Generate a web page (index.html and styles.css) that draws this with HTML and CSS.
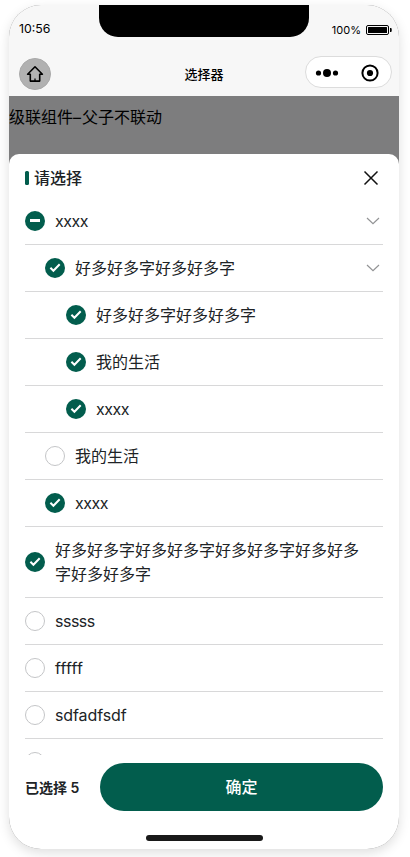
FILE: index.html
```html
<!DOCTYPE html>
<html lang="zh-CN">
<head>
<meta charset="utf-8">
<title>选择器</title>
<link rel="stylesheet" href="styles.css">
</head>
<body>
<svg class="defs" width="0" height="0">
  <symbol id="check" viewBox="0 0 20 20"><circle cx="10" cy="10" r="10" fill="#025d4d"/><path d="M5.4 9.8l3 3L14.7 6.3" fill="none" stroke="#fff" stroke-width="2"/></symbol>
  <symbol id="minus" viewBox="0 0 20 20"><circle cx="10" cy="10" r="10" fill="#025d4d"/><path d="M5 9.5h10" stroke="#fff" stroke-width="3"/></symbol>
  <symbol id="empty" viewBox="0 0 20 20"><circle cx="10" cy="10" r="9.5" fill="#fff" stroke="#c4c5c7"/></symbol>
  <symbol id="down" viewBox="0 0 14 8"><path d="M1 1l6 5.7L13 1" fill="none" stroke="#929395" stroke-width="1.2"/></symbol>
</svg>
<div class="phone">
  <div class="notch"></div>
  <header class="top">
    <div class="status">
      <span class="time">10:56</span>
      <span class="battery">100%
        <svg width="26" height="10" viewBox="0 0 26 10"><rect x=".5" y=".5" width="22" height="9" rx="1.5" fill="none" stroke="#000"/><rect x="2" y="2" width="19" height="6" rx=".5"/><path d="M24 3h.7q1 0 1 1v2q0 1-1 1H24z"/></svg>
      </span>
    </div>
    <div class="nav">
      <span class="home"><svg width="18" height="18" viewBox="0 0 18 18"><path d="M9 1.8L1.6 9.2h2.7v6.9h9.4V9.2h2.7z" fill="none" stroke="#000" stroke-width="1.6" stroke-linejoin="round"/><path d="M9 13.4V16" stroke="#000" stroke-width="1.3"/></svg></span>
      <h1>选择器</h1>
      <span class="capsule">
        <svg width="24" height="10" viewBox="0 0 24 10"><circle cx="3.5" cy="5" r="2.6"/><circle cx="12" cy="5" r="4"/><circle cx="20.5" cy="5" r="2.6"/></svg>
        <svg width="18" height="18" viewBox="0 0 18 18"><circle cx="9" cy="9" r="7.6" fill="none" stroke="#000" stroke-width="2"/><circle cx="9" cy="9" r="3.1"/></svg>
      </span>
    </div>
  </header>
  <div class="backdrop">级联组件<span class="dash">–</span>父子不联动</div>
  <section class="sheet">
    <div class="title"><i></i><h2>请选择</h2><svg width="16" height="16" viewBox="0 0 16 16"><path d="M1.5 1.5l13 13M14.5 1.5l-13 13" stroke="#111" stroke-width="1.5"/></svg></div>
    <ul class="list">
      <li><svg class="box"><use href="#minus"/></svg><span class="xs">xxxx</span><svg class="arrow"><use href="#down"/></svg></li>
      <li class="l1"><svg class="box"><use href="#check"/></svg><span>好多好多字好多好多字</span><svg class="arrow"><use href="#down"/></svg></li>
      <li class="l2"><svg class="box"><use href="#check"/></svg><span>好多好多字好多好多字</span></li>
      <li class="l2"><svg class="box"><use href="#check"/></svg><span>我的生活</span></li>
      <li class="l2"><svg class="box"><use href="#check"/></svg><span class="xs">xxxx</span></li>
      <li class="l1"><svg class="box"><use href="#empty"/></svg><span>我的生活</span></li>
      <li class="l1"><svg class="box"><use href="#check"/></svg><span class="xs">xxxx</span></li>
      <li class="tall"><svg class="box"><use href="#check"/></svg><span>好多好多字好多好多字好多好多字好多好多字好多好多字</span></li>
      <li><svg class="box"><use href="#empty"/></svg><span class="xs">sssss</span></li>
      <li><svg class="box"><use href="#empty"/></svg><span class="ff">fffff</span></li>
      <li><svg class="box"><use href="#empty"/></svg><span class="mixed">sdfadfsdf</span></li>
      <li><svg class="box"><use href="#empty"/></svg></li>
    </ul>
    <div class="footer"><span>已选择 5</span><button>确定</button></div>
    <div class="indicator"></div>
  </section>
</div>
</body>
</html>
```
FILE: styles.css
```css
* { box-sizing: border-box; }
body {
  margin: 0;
  height: 857px;
  padding: 5px 0 0 9px;
  overflow: hidden;
  background: #fff;
  font-family: Inter, "Noto Sans CJK SC", sans-serif;
  color: #202326;
}
.defs { position: absolute; }
.phone {
  position: relative;
  display: flex;
  flex-direction: column;
  width: 390px;
  height: 844px;
  border-radius: 32px;
  overflow: hidden;
  background: #7d7d7e;
  box-shadow: 0 4px 12px rgba(0, 0, 0, .13);
}
.notch {
  position: absolute;
  left: 90px;
  top: 0;
  width: 210px;
  height: 32px;
  border-radius: 0 0 19px 19px;
  background: #000;
}
.top { height: 91px; flex: none; background: #f7f7f7; color: #000; }
.status {
  display: flex;
  justify-content: space-between;
  height: 47px;
  padding: 15px 7px 0 10px;
  line-height: 18px;
}
.time { font-size: 12.3px; }
.battery { display: flex; align-items: center; gap: 5px; height: 20px; font-size: 11px; }
.nav {
  display: grid;
  grid-template-columns: 1fr auto 1fr;
  align-items: center;
  height: 44px;
  padding: 0 7px 0 10px;
}
.home {
  display: flex;
  align-items: center;
  justify-content: center;
  width: 32px;
  height: 32px;
  border: 1px solid #a9a9a9;
  border-radius: 50%;
  background: #b1b1b1;
}
h1 { margin: 0; padding-right: 3px; font-size: 13px; line-height: 20px; font-weight: 500; }
.capsule {
  justify-self: end;
  display: flex;
  align-items: center;
  justify-content: space-between;
  width: 87px;
  height: 32px;
  margin-top: -4px;
  padding: 1px 12px 0 9px;
  border: 1px solid #dcdcdc;
  border-radius: 16px;
  background: #fff;
}
.backdrop { flex: none; height: 58px; padding-top: 9px; font-size: 16px; line-height: 24px; color: #000; }
.dash { letter-spacing: 1px; }
.sheet {
  display: flex;
  flex-direction: column;
  flex: 1;
  min-height: 0;
  border-radius: 10px 10px 0 0;
  background: #fff;
}
.title { display: flex; align-items: center; height: 44px; flex: none; padding: 4px 20px 0 16px; }
.title i { width: 4px; height: 14px; margin-right: 5px; border-radius: 1.5px; background: #025d4d; }
h2 { margin: 0; flex: 1; font-size: 16px; line-height: 24px; font-weight: 500; }
.list {
  height: 557px;
  flex: none;
  margin: 0;
  padding: 0 16px;
  overflow: hidden;
  list-style: none;
}
li {
  display: flex;
  align-items: center;
  height: 47px;
  padding-right: 3px;
  border-bottom: 1px solid #d8d8d9;
  font-size: 16px;
  line-height: 24px;
}
.l1 { padding-left: 20px; }
.l2 { padding-left: 41px; }
.tall { height: 71px; padding-right: 16px; }
li span { flex: 1; word-break: break-all; }
.xs { letter-spacing: -.5px; }
.ff { letter-spacing: .2px; }
.mixed { letter-spacing: -.1px; }
.box { width: 20px; height: 20px; flex: none; margin-right: 10px; }
.arrow { width: 14px; height: 8px; flex: none; }
.footer { display: flex; align-items: center; flex: none; height: 64px; padding: 0 16px; font-size: 14px; font-weight: 600; }
.footer span { width: 75px; }
button {
  flex: 1;
  height: 48px;
  border: 0;
  border-radius: 24px;
  background: #025d4d;
  color: #fff;
  font: 500 16px/24px Inter, "Noto Sans CJK SC", sans-serif;
}
.indicator { width: 117px; height: 6px; margin: 16px 0 0 137px; border-radius: 3px; background: #191919; }
```
